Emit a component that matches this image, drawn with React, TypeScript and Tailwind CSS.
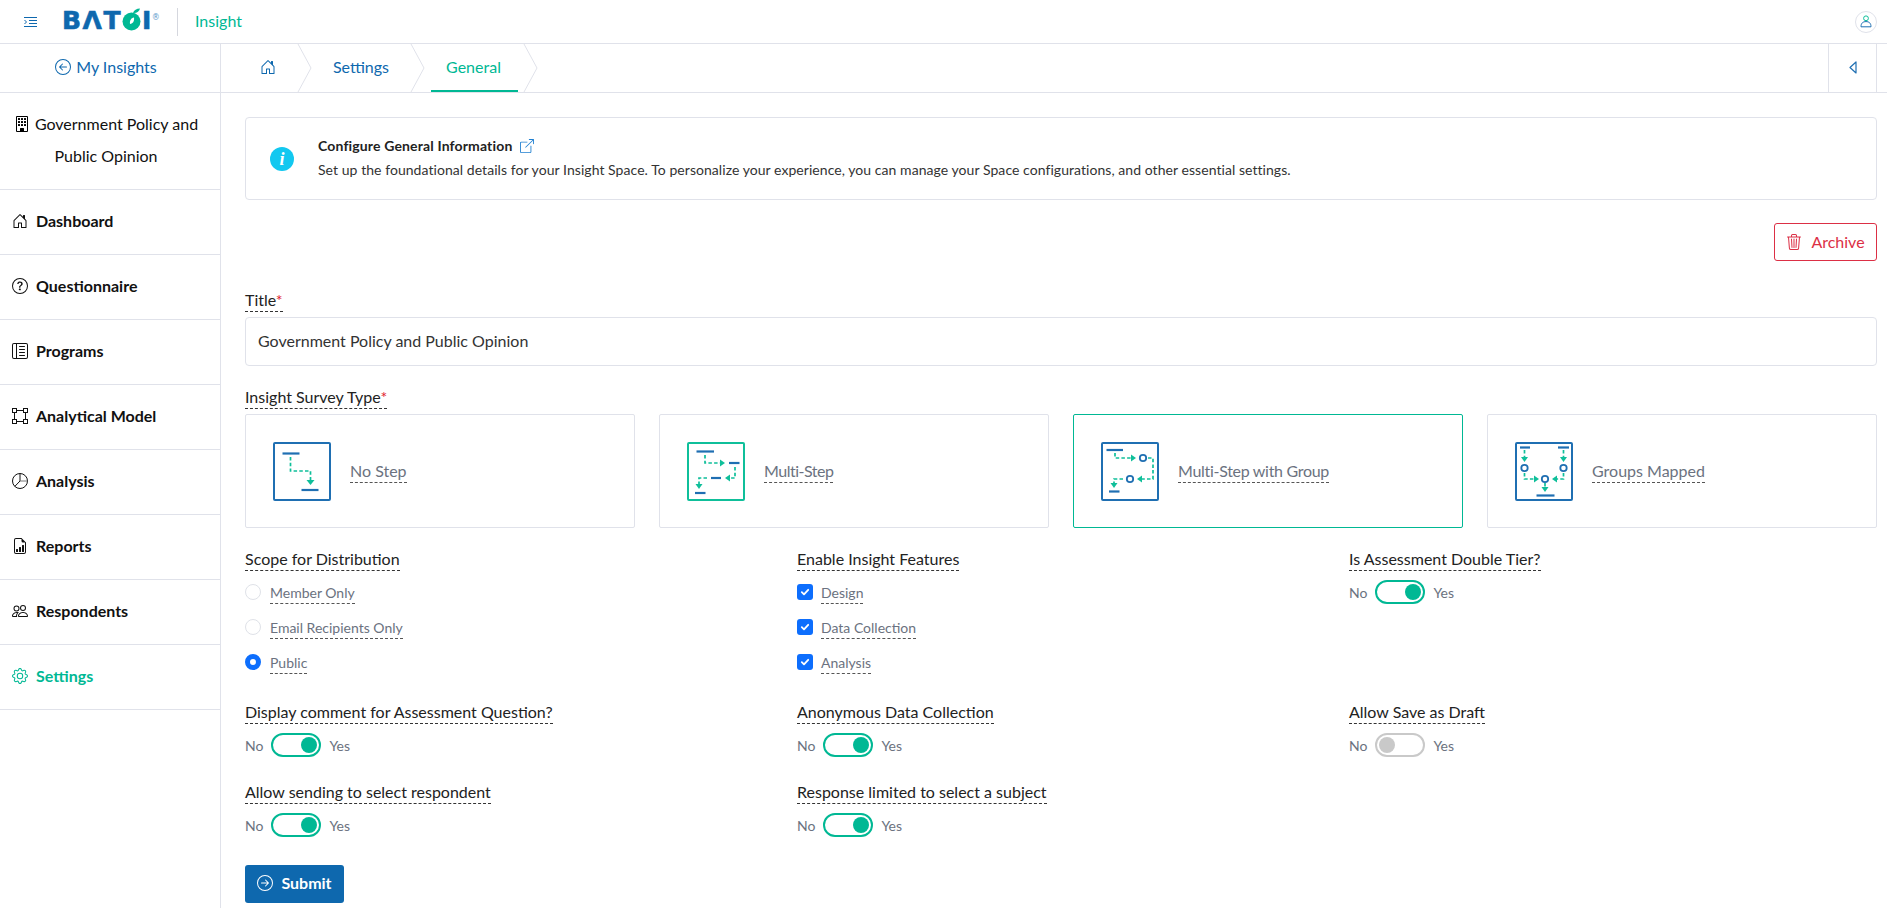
import React from "react";
import {
  BsArrowLeftCircle, BsArrowRightCircle, BsBoundingBox, BsBoxArrowUpRight, BsBuilding,
  BsFileEarmarkBarGraph, BsGear, BsHouseDoor, BsLayoutTextSidebarReverse, BsPeople, BsQuestionCircle, BsTrash3,
} from "react-icons/bs";

const BLUE = "#1f6fb2";
const TEAL = "#0fbf9a";

function Label({ children, req }: { children: React.ReactNode; req?: boolean }) {
  return (
    <div className="flex h-[23px]">
      <span className="h-[23px] border-b border-dashed border-[#333] text-base leading-[21px] text-[#222]">
        {children}
        {req && <span className="text-[#e0202f]">*</span>}
      </span>
    </div>
  );
}

function SubLabel({ children }: { children: React.ReactNode }) {
  return (
    <span className="h-[23px] border-b border-dashed border-[#555] text-sm leading-[24px] text-[#6b7280]">{children}</span>
  );
}

function Radio({ label, checked }: { label: string; checked?: boolean }) {
  return (
    <div className="flex h-[23px] items-start gap-[9px]">
      <span
        className={
          checked
            ? "mt-[3px] h-4 w-4 rounded-full border-[5px] border-[#0d6efd] bg-white"
            : "mt-[3px] h-4 w-4 rounded-full border border-[#dfe2e8] bg-white"
        }
      />
      <SubLabel>{label}</SubLabel>
    </div>
  );
}

function Check({ label }: { label: string }) {
  return (
    <div className="flex h-[23px] items-start gap-2">
      <span className="mt-[3px] flex h-4 w-4 items-center justify-center rounded-[3px] bg-[#0d6efd]">
        <svg width="10" height="10" viewBox="0 0 10 10" fill="none">
          <path d="M1.8 5.2 4 7.4 8.2 2.8" stroke="#fff" strokeWidth="1.8" strokeLinecap="round" strokeLinejoin="round" />
        </svg>
      </span>
      <SubLabel>{label}</SubLabel>
    </div>
  );
}

function Toggle({ on = true }: { on?: boolean }) {
  return (
    <div className="mt-[9px] flex h-6 items-center gap-2 text-sm text-[#6b7280]">
      <span className="pt-[2px]">No</span>
      <span
        className={
          on
            ? "flex h-6 w-[50px] items-center justify-end rounded-full border-2 border-[#00b894] px-[2px]"
            : "flex h-6 w-[50px] items-center justify-start rounded-full border-2 border-[#c9c9c9] px-[2px]"
        }
      >
        <span className={on ? "h-4 w-4 rounded-full bg-[#00b894]" : "h-4 w-4 rounded-full bg-[#c9c9c9]"} />
      </span>
      <span className="pt-[2px]">Yes</span>
    </div>
  );
}

const Bar = ({ x1, x2, y }: { x1: number; x2: number; y: number }) => (
  <line x1={x1} x2={x2} y1={y} y2={y} stroke={BLUE} strokeWidth="2.2" />
);
const Dash = ({ d }: { d: string }) => (
  <path d={d} fill="none" stroke={TEAL} strokeWidth="1.7" strokeDasharray="3.5 2.2" />
);
const Tri = ({ p }: { p: string }) => <polygon points={p} fill={TEAL} />;
const Dot = ({ x, y }: { x: number; y: number }) => (
  <circle cx={x} cy={y} r="3.2" fill="none" stroke={BLUE} strokeWidth="1.8" />
);

function Frame({ color = BLUE, children }: { color?: string; children: React.ReactNode }) {
  return (
    <svg width="58" height="59" viewBox="0 0 58 59" className="shrink-0">
      <rect x="1" y="1" width="56" height="57" rx="1" fill="none" stroke={color} strokeWidth="2" />
      {children}
    </svg>
  );
}

const NoStep = () => (
  <Frame>
    <Bar x1={9.5} x2={26.5} y={11.5} />
    <Dash d="M17.5 15V29H37.5V38" />
    <Tri p="33.5,38 41.5,38 37.5,43" />
    <Bar x1={28.5} x2={45.5} y={48} />
  </Frame>
);

const MultiStep = () => (
  <Frame color={TEAL}>
    <Bar x1={9.5} x2={27} y={9.5} />
    <Dash d="M18 13V21H33" />
    <Tri p="33,17.5 38,21 33,24.5" />
    <Bar x1={42} x2={52.5} y={21} />
    <Dash d="M48 25V36H43" />
    <Tri p="43,32.5 38,36 43,39.5" />
    <Bar x1={24} x2={34} y={36} />
    <Dash d="M20 36H12V42" />
    <Tri p="8.5,42 15.5,42 12,47" />
    <Bar x1={8} x2={18.5} y={51} />
  </Frame>
);

const MultiGroup = () => (
  <Frame>
    <Bar x1={5.5} x2={22} y={8} />
    <Dash d="M14 11V16H30" />
    <Tri p="30,12.5 35,16 30,19.5" />
    <Dot x={42} y={16} />
    <Dash d="M47 16H52V37H41" />
    <Tri p="41,33.5 36,37 41,40.5" />
    <Dot x={29} y={37} />
    <Dash d="M22 37H13V41" />
    <Tri p="9.5,41 16.5,41 13,46" />
    <Bar x1={8} x2={18.5} y={49.5} />
  </Frame>
);

const Groups = () => (
  <Frame>
    <Bar x1={5} x2={15} y={5.5} />
    <Bar x1={43} x2={54} y={5.5} />
    <Dash d="M9.5 8V15" />
    <Tri p="6,15 13,15 9.5,20" />
    <Dash d="M48.5 8V15" />
    <Tri p="45,15 52,15 48.5,20" />
    <Dot x={9.5} y={26} />
    <Dot x={48.5} y={26} />
    <Dash d="M9.5 31V37H19" />
    <Tri p="19,33.5 24,37 19,40.5" />
    <Dot x={30} y={37} />
    <Dash d="M48.5 31V37H42" />
    <Tri p="42,33.5 37,37 42,40.5" />
    <Dash d="M30 41V45" />
    <Tri p="26.5,45 33.5,45 30,50" />
    <Bar x1={21.5} x2={39.5} y={53.5} />
  </Frame>
);

function Card({ icon, label, active, tight }: { icon: React.ReactNode; label: string; active?: boolean; tight?: string }) {
  return (
    <div
      className={
        active
          ? "flex h-[114px] items-center gap-[19px] rounded-[2px] border border-[#00b894] pl-[27px]"
          : "flex h-[114px] items-center gap-[19px] rounded-[2px] border border-[#e0e2ea] pl-[27px]"
      }
    >
      {icon}
      <span className={"h-[23px] border-b border-dashed border-[#555] text-base leading-[22px] text-[#6b7280] " + (tight ?? "")}>{label}</span>
    </div>
  );
}

function NavItem({ icon, label, active }: { icon: React.ReactNode; label: string; active?: boolean }) {
  return (
    <div
      className={
        active
          ? "flex h-[65px] items-center gap-2 border-b border-[#e0e2ea] pb-[2px] pl-3 text-base font-bold text-[#00b894]"
          : "flex h-[65px] items-center gap-2 border-b border-[#e0e2ea] pb-[2px] pl-3 text-base font-bold text-[#111]"
      }
    >
      <span className="flex h-4 w-4 items-center justify-center text-base">{icon}</span>
      <span>{label}</span>
    </div>
  );
}

function Chevron() {
  return (
    <svg width="15" height="48" viewBox="0 0 15 48" className="shrink-0">
      <path d="M1 0 14 24 1 48" fill="none" stroke="#e0e2ea" strokeWidth="1" />
    </svg>
  );
}

function PieIcon() {
  return (
    <svg width="16" height="16" viewBox="0 0 16 16" fill="none" stroke="currentColor" strokeWidth="1">
      <circle cx="8" cy="8" r="7.5" />
      <path d="M8 .5V8L2.8 13.4" />
      <path d="M8 8H15.5" stroke="#777" />
    </svg>
  );
}

function Logo() {
  return (
    <div className="flex h-[22px] w-[99px] items-end font-['DejaVu_Sans',sans-serif] text-[25px] leading-[20px] font-bold tracking-[1.5px] text-[#0e68ae] [-webkit-text-stroke:0.6px_#0e68ae]">
      <span>BΛT</span>
      <svg width="22" height="23" viewBox="0 0 22 23" className="-ml-[1px] shrink-0">
        <circle cx="10.5" cy="13.5" r="9" fill="#00b894" />
        <path d="M13 9.5C10 10 8.5 12.5 9 16C12 15.5 13.5 13 13 9.5Z" fill="#fff" />
        <path d="M12 5C13 2 15.5 0.5 19 0.5C18.5 3.5 15.5 5.5 12 5Z" fill="#00b894" />
      </svg>
      <span className="-ml-[1px]">I</span>
      <span className="mb-[9px] ml-[-1px] text-[8px] leading-[8px] font-normal tracking-normal text-[#5b9ccc] [-webkit-text-stroke:0px]">®</span>
    </div>
  );
}

export default function App() {
  return (
    <div className="flex h-screen flex-col overflow-hidden bg-white font-[Lato,sans-serif] text-[#222]">
      <header className="flex h-[44px] shrink-0 items-center border-b border-[#e0e2ea]">
        <svg width="13" height="10" viewBox="0 0 13 10" className="ml-[24px]" fill="none" stroke="#0e68ae" strokeWidth="1">
          <path d="M0 .5H13M5 3.5H13M5 6.5H13M0 9.5H13M0.5 3 2.5 5 0.5 7" />
        </svg>
        <div className="mb-[3px] ml-[25px]">
          <Logo />
        </div>
        <div className="ml-[16px] h-[28px] w-px bg-[#d5d7de]" />
        <span className="ml-[17px] pb-[2px] text-base text-[#00b894]">Insight</span>
        <div className="mr-[10px] ml-auto flex h-[22px] w-[22px] items-center justify-center rounded-full border border-[#e0e2ea]">
          <svg width="12" height="13" viewBox="0 0 12 13" fill="none">
            <circle cx="6" cy="3.3" r="2.4" stroke={TEAL} strokeWidth="1" />
            <path d="M1 11.8C1 8 3 6.6 6 6.6S11 8 11 11.8Z" stroke={BLUE} strokeWidth="1" />
          </svg>
        </div>
      </header>

      <div className="flex min-h-0 flex-1">
        <aside className="w-[221px] shrink-0 border-r border-[#e0e2ea]">
          <div className="flex h-[49px] items-center justify-center gap-[5px] border-b border-[#e0e2ea] pr-[8px] pb-[2px] text-base text-[#0e68ae]">
            <BsArrowLeftCircle className="text-base" />
            <span>My Insights</span>
          </div>
          <div className="h-[97px] border-b border-[#e0e2ea] pt-[15px] pr-[8px] text-center text-base leading-[32px] text-[#111]">
            <BsBuilding className="mr-[5px] inline-block align-[-2px] text-base text-black" />
            Government Policy and
            <br />
            Public Opinion
          </div>
          <NavItem icon={<BsHouseDoor />} label="Dashboard" />
          <NavItem icon={<BsQuestionCircle />} label="Questionnaire" />
          <NavItem icon={<BsLayoutTextSidebarReverse />} label="Programs" />
          <NavItem icon={<BsBoundingBox />} label="Analytical Model" />
          <NavItem icon={<PieIcon />} label="Analysis" />
          <NavItem icon={<BsFileEarmarkBarGraph />} label="Reports" />
          <NavItem icon={<BsPeople />} label="Respondents" />
          <NavItem icon={<BsGear />} label="Settings" active />
        </aside>

        <div className="flex min-w-0 flex-1 flex-col">
          <nav className="flex h-[49px] shrink-0 items-stretch border-b border-[#e0e2ea] text-base">
            <div className="flex w-[76px] items-center justify-center pb-[2px] pl-[17px] text-[#0e68ae]">
              <BsHouseDoor className="text-base" />
            </div>
            <Chevron />
            <div className="flex w-[98px] items-center justify-center pb-[2px] text-[#0e68ae]">Settings</div>
            <Chevron />
            <div className="ml-[6px] flex w-[87px] items-center justify-center border-b-2 border-[#00b894] pr-[2px] text-[#00b894]">General</div>
            <div className="ml-[5px]">
              <Chevron />
            </div>
            <div className="mr-[10px] ml-auto flex w-[49px] items-center justify-center border-x border-[#e0e2ea] pb-[2px]">
              <svg width="8" height="13" viewBox="0 0 8 13" fill="none" stroke="#1f6fb2" strokeWidth="1.2" strokeLinejoin="round">
                <path d="M7 1V12L1 6.5Z" />
              </svg>
            </div>
          </nav>

          <main className="flex-1 pt-6 pr-[10px] pl-6">
            <div className="flex h-[83px] items-center rounded border border-[#e0e2ea] pl-[24px]">
              <span className="flex h-6 w-6 items-center justify-center rounded-full bg-[#12c8f0] font-['Liberation_Serif',serif] text-lg font-bold text-white italic">
                i
              </span>
              <div className="ml-[24px] pb-[2px] text-sm">
                <div className="flex h-[23px] items-center gap-2 font-bold tracking-[0.15px] text-[#222]">
                  Configure General Information
                  <BsBoxArrowUpRight className="text-sm font-normal text-[#1f7fd0]" />
                </div>
                <div className="h-[23px] leading-[23px] tracking-[0.056px] text-[#333]">
                  Set up the foundational details for your Insight Space. To personalize your experience, you can manage your Space configurations, and other essential settings.
                </div>
              </div>
            </div>

            <div className="mt-[23px] flex justify-end">
              <button className="flex h-[38px] w-[103px] items-center justify-center gap-[9px] rounded-[3px] border border-[#dc2f45] text-base text-[#dc2f45]">
                <BsTrash3 className="text-base" />
                Archive
              </button>
            </div>

            <div className="mt-[28px]">
              <Label req>Title</Label>
            </div>
            <div className="mt-[5px] flex h-[49px] items-center rounded border border-[#e0e2ea] px-3 pb-[2px] text-base text-[#333]">
              Government Policy and Public Opinion
            </div>

            <div className="mt-5">
              <Label req>Insight Survey Type</Label>
            </div>
            <div className="mt-[5px] grid grid-cols-4 gap-6">
              <Card icon={<NoStep />} label="No Step" />
              <Card icon={<MultiStep />} label="Multi-Step" tight="tracking-[-0.5px]" />
              <Card icon={<MultiGroup />} label="Multi-Step with Group" active tight="tracking-[-0.3px]" />
              <Card icon={<Groups />} label="Groups Mapped" />
            </div>

            <div className="mt-5 grid grid-cols-3 gap-x-6 gap-y-6">
              <div className="pb-[3px]">
                <Label>Scope for Distribution</Label>
                <div className="mt-[10px] flex flex-col gap-3">
                  <Radio label="Member Only" />
                  <Radio label="Email Recipients Only" />
                  <Radio label="Public" checked />
                </div>
              </div>
              <div>
                <Label>Enable Insight Features</Label>
                <div className="mt-[10px] flex flex-col gap-3">
                  <Check label="Design" />
                  <Check label="Data Collection" />
                  <Check label="Analysis" />
                </div>
              </div>
              <div>
                <Label>Is Assessment Double Tier?</Label>
                <Toggle />
              </div>

              <div>
                <Label>Display comment for Assessment Question?</Label>
                <Toggle />
              </div>
              <div>
                <Label>Anonymous Data Collection</Label>
                <Toggle />
              </div>
              <div>
                <Label>Allow Save as Draft</Label>
                <Toggle on={false} />
              </div>

              <div>
                <Label>Allow sending to select respondent</Label>
                <Toggle />
              </div>
              <div>
                <Label>Response limited to select a subject</Label>
                <Toggle />
              </div>
            </div>

            <button className="mt-7 flex h-[38px] w-[99px] items-center justify-center gap-2 rounded-[3px] bg-[#0e68ae] pb-[2px] text-base font-bold text-white">
              <BsArrowRightCircle className="text-base" />
              Submit
            </button>
          </main>
        </div>
      </div>
    </div>
  );
}
